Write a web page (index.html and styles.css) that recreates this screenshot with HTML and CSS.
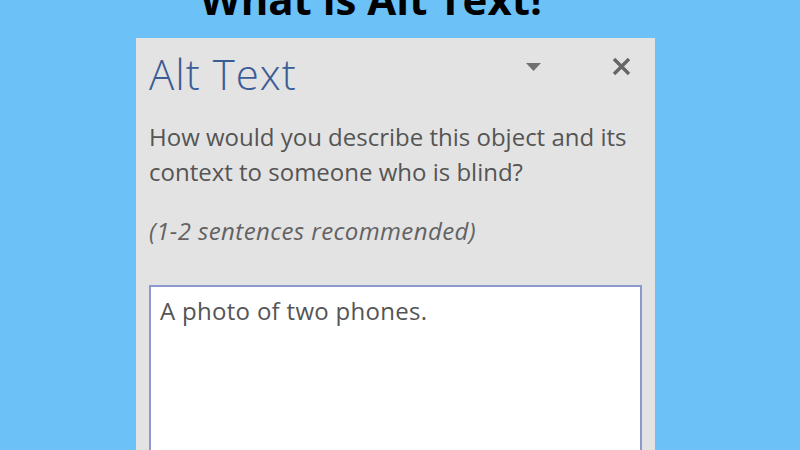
FILE: index.html
```html
<!DOCTYPE html>
<html lang="en">
<head>
  <meta charset="utf-8" />
  <title>What is Alt Text!</title>
  <link rel="stylesheet" href="styles.css">
</head>
<body>
  <h1 class="headline">What is Alt Text!</h1>
  <section class="pane">
    <div class="pane-head">
      <h2 class="pane-title">Alt Text</h2>
      <div class="pane-tools">
        <svg class="caret" width="15" height="8" viewBox="0 0 15 8"><path d="M0 0 L15 0 L7.5 8 Z" fill="#707070"/></svg>
        <svg class="close" width="19" height="19" viewBox="0 0 19 19"><path d="M2 2 L17 17 M17 2 L2 17" stroke="#666" stroke-width="3.4"/></svg>
      </div>
    </div>
    <p class="pane-text">How would you describe this object and its<br>context to someone who is blind?</p>
    <p class="pane-hint">(1-2 sentences recommended)</p>
    <div class="alt-box">A photo of two phones.</div>
  </section>
</body>
</html>
```

FILE: styles.css
```css
*
{
     margin:0;
     padding:0;
}
body
{
     background-color:#6cc1f6;
     height:450px;
     overflow:hidden;
     display:flex;
     flex-direction:column;
     align-items:center;
     font-family:"Open Sans", sans-serif;
}
.headline
{
     font-weight:700;
     font-size:42px;
     line-height:42px;
     margin-top:-22px;
     color:#000;
     width:800px;
     padding-right:58px;
     box-sizing:border-box;
     text-align:center;
}
.pane
{
     width:519px;
     margin-top:18px;
     margin-left:-9px;
     background:#e3e3e3;
     flex:1;
     padding:0 0 0 13px;
     box-sizing:border-box;
}
.pane-head
{
     display:flex;
     justify-content:space-between;
     align-items:flex-start;
     padding-top:8px;
     padding-right:24px;
}
.pane-title
{
     font-weight:300;
     font-size:42px;
     line-height:50px;
     padding-top:3px;
     color:#3b5c95;
     letter-spacing:1px;
}
.pane-tools
{
     display:flex;
     align-items:center;
     gap:71px;
     margin-top:11px;
}
.pane-text
{
     font-size:24px;
     line-height:35px;
     color:#555;
     margin-top:20px;
}
.pane-hint
{
     font-style:italic;
     font-size:24px;
     line-height:35px;
     letter-spacing:0.4px;
     color:#626262;
     margin-top:24px;
}
.alt-box
{
     margin-top:37px;
     width:493px;
     height:200px;
     box-sizing:border-box;
     background:#fff;
     border:2px solid #8b99cf;
     border-bottom:none;
     padding:6px 0 0 9px;
     font-size:24px;
     line-height:35px;
     letter-spacing:0.3px;
     color:#555;
}
```
